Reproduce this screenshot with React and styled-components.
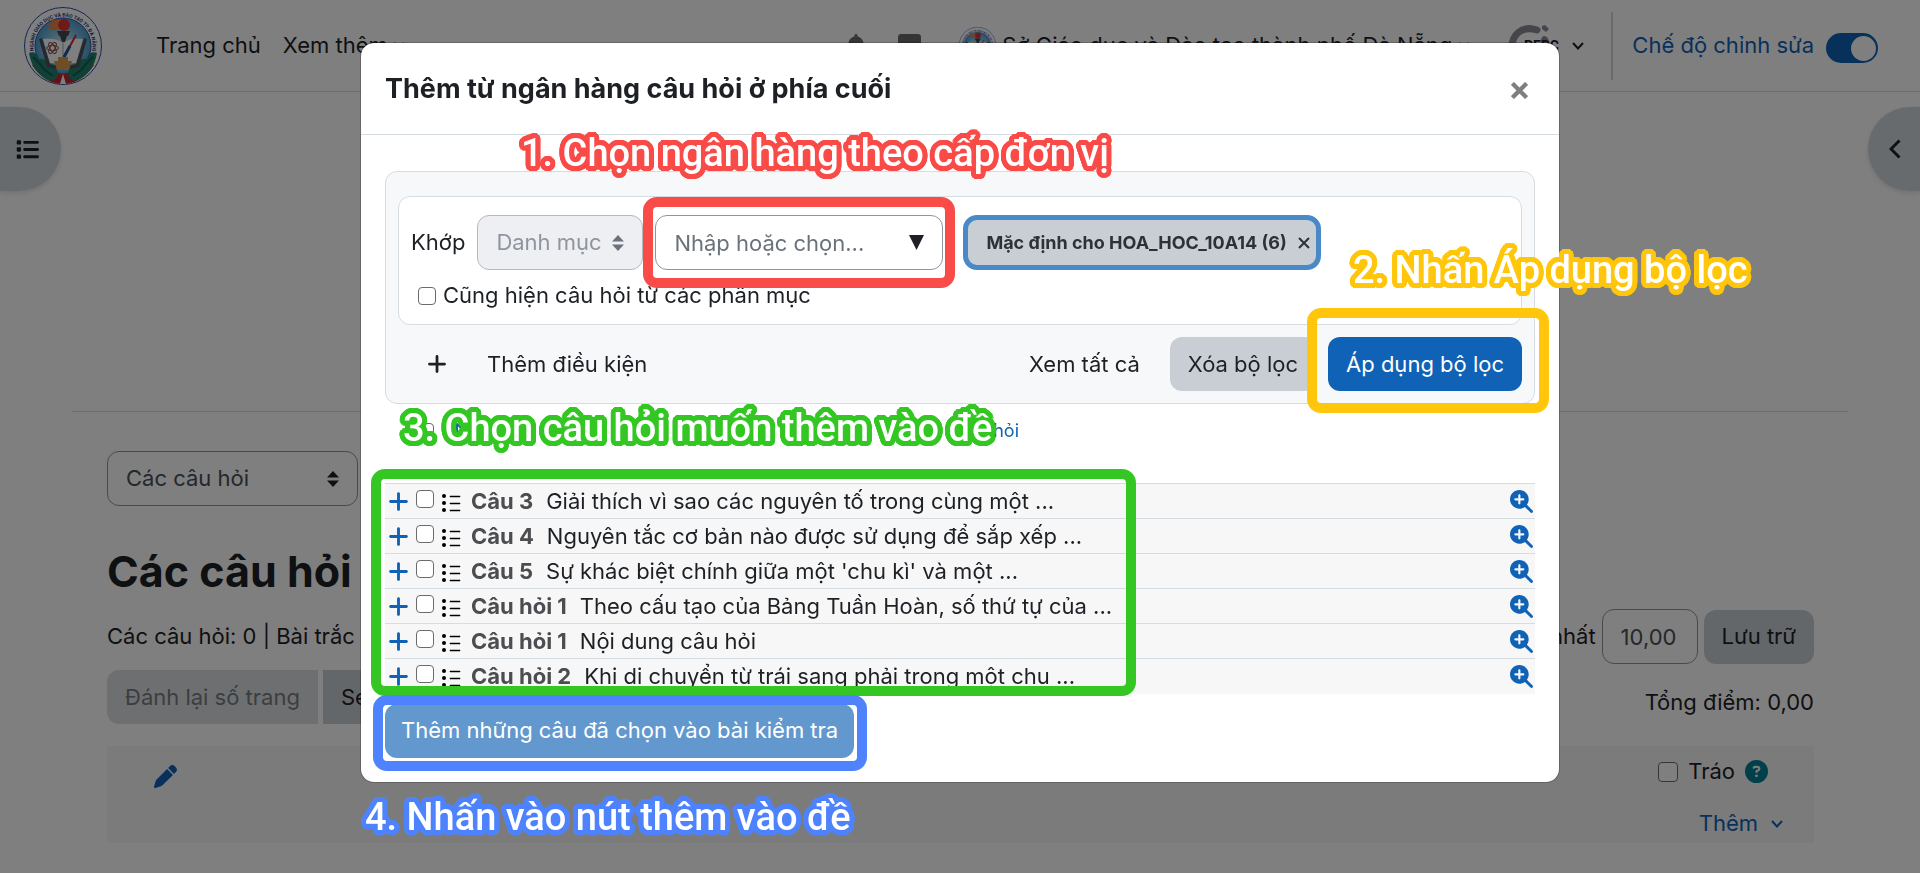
import React, { useId, useState } from 'react';
import styled, { createGlobalStyle, css } from 'styled-components';
import {
    FaBell,
    FaCircleQuestion,
    FaList,
    FaMagnifyingGlassPlus,
    FaPen,
    FaPlus,
} from 'react-icons/fa6';

const GlobalStyle = createGlobalStyle`
    :root {
        --text: #1d2125;
        --muted: #495057;
        --blue: #0f62b5;
        --grey: #c9ced4;
        --line: #d5dce2;
        --red: #f94b48;
        --yellow: #ffc60b;
        --green: #34c724;
        --indigo: #4e83fd;
        --radius: 12px;
        --font: Inter, 'Noto Sans', sans-serif;
    }

    * {
        box-sizing: border-box;
    }

    body {
        margin: 0;
        background: #fff;
        color: var(--text);
        font-family: var(--font);
        font-size: 22px;
        line-height: 33px;
        overflow: hidden;
    }

    button,
    input,
    select {
        font: inherit;
        color: inherit;
    }

    button {
        padding: 0;
        border: 0;
        background: none;
        white-space: nowrap;
    }

    a {
        color: inherit;
        text-decoration: none;
    }

    svg {
        display: block;
        flex: none;
    }
`;

/* ---------- icons ---------- */

const Chevron = () => (
    <svg width="12" height="12" viewBox="0 0 12 12" fill="none" stroke="currentColor" strokeWidth="2">
        <path d="M1 3 6 8.5 11 3" />
    </svg>
);

const ChevronLeft = () => (
    <svg width="12" height="20" viewBox="0 0 12 20" fill="none" stroke="currentColor" strokeWidth="3">
        <path d="M10.5 1.5 2 10l8.5 8.5" />
    </svg>
);

const SortArrows = () => (
    <svg width="12" height="16" viewBox="0 0 12 16" fill="currentColor">
        <path d="M6 0 12 6.5H0zM6 16 0 9.5h12z" />
    </svg>
);

const Caret = () => (
    <svg width="15" height="15" viewBox="0 0 15 15" fill="currentColor">
        <path d="M0 0h15L7.5 15z" />
    </svg>
);

const Cross = ({ size = 12, weight = 2 }) => (
    <svg width={size} height={size} viewBox="0 0 12 12" stroke="currentColor" strokeWidth={weight}>
        <path d="M1 1 11 11M11 1 1 11" />
    </svg>
);

const SortUp = () => (
    <svg width="14" height="16" viewBox="0 0 14 16" fill="none" stroke="currentColor" strokeWidth="2">
        <path d="M5 16V2M1 6l4-4 4 4" />
    </svg>
);

const ChatIcon = () => (
    <svg width="23" height="24" viewBox="0 0 23 24" fill="currentColor">
        <path d="M3 0h17a3 3 0 0 1 3 3v12a3 3 0 0 1-3 3h-6l-6 6v-6H3a3 3 0 0 1-3-3V3a3 3 0 0 1 3-3z" />
    </svg>
);

const ChoiceIcon = () => (
    <svg width="20" height="20" viewBox="0 0 20 20" fill="#000">
        <circle cx="3" cy="3" r="2" />
        <circle cx="3" cy="10" r="2" />
        <circle cx="3" cy="17" r="2" />
        <path d="M9 3h10v1H9zM9 10h10v1H9zM9 17h10v1H9z" stroke="#000" strokeWidth=".5" />
    </svg>
);

const Emblem = ({ size }) => {
    const id = useId();

    return (
        <svg width={size} height={size} viewBox="0 0 78 78">
            <defs>
                <path id={id} d="M12 51A29.5 29.5 0 1 1 66 51" />
                <radialGradient id={`${id}sky`}>
                    <stop offset="0" stopColor="#cfeaf8" />
                    <stop offset="1" stopColor="#4b9fd0" />
                </radialGradient>
            </defs>
            <circle cx="39" cy="39" r="38.5" fill="#fff" stroke="#2c4fa3" strokeWidth="1" />
            <circle cx="39" cy="39" r="28" fill={`url(#${id}sky)`} stroke="#2c4fa3" strokeWidth="1" />
            <path d="M8 58c8 12 19 19 31 19s23-7 31-19l-7-4c-6 8-14 13-24 13s-18-5-24-13z" fill="#c8232f" />
            <path d="M5 46c5-2 9 1 10 6 5-1 9 2 10 7 5 0 8 3 10 8-3 7-8 8-13 5C13 67 7 58 5 46z" fill="#23806f" />
            <path d="M73 46c-5-2-9 1-10 6-5-1-9 2-10 7-5 0-8 3-10 8 3 7 8 8 13 5 9-5 15-14 17-26z" fill="#23806f" />
            <path d="M9 50l6 6 6 7 8 6M69 50l-6 6-6 7-8 6" fill="none" stroke="#145f55" strokeWidth="2" />
            <path d="M39 67l3 10h-6z" fill="#fff" />
            <path d="M15 32l8 28 12 3h8l12-3 8-28-3-1-8 26-13 3-13-3-8-26z" fill="#4d5258" />
            <path d="M19 32c8-1 15 0 20 4 5-4 12-5 20-4l-7 24c-5 0-9 1-13 4-4-3-8-4-13-4z" fill="#fff" />
            <path d="M39 36v22" stroke="#aab" strokeWidth="1" />
            <g fill="none" stroke="#8c4a44" strokeWidth="1">
                <ellipse cx="28.500" cy="41" rx="6" ry="2.500" />
                <ellipse cx="28.500" cy="41" rx="6" ry="2.500" transform="rotate(60 28.500 41)" />
                <ellipse cx="28.500" cy="41" rx="6" ry="2.500" transform="rotate(120 28.500 41)" />
            </g>
            <path d="M33 24h13l-2 5h-9zM36 29h7l-2 6h-3z" fill="#44474d" />
            <path d="M35 22c-5 3-8-1-12 1 2-3 4-3 6-4-3 0-4-2-7-1 3-3 6-2 8-3-1-1-3-1-4-2 5-1 8 1 11-1z" fill="#f08345" />
            <circle cx="40" cy="18" r="6" fill="#e0332c" />
            <path d="M52 28 40 50" stroke="#d1283a" strokeWidth="2" />
            <path d="M46 39 40 50" stroke="#1f55a5" strokeWidth="3" />
            <path d="M34 50h10v4h4l-3 9H33l-3-9h4z" fill="#dc9c4c" />
            <text fill="#27357d" fontSize="5" fontWeight="700" fontFamily="Roboto, sans-serif">
                <textPath href={`#${id}`} startOffset="50%" textAnchor="middle">
                    NGÀNH GIÁO DỤC VÀ ĐÀO TẠO TP. ĐÀ NẴNG
                </textPath>
            </text>
        </svg>
    );
};

const SchoolMark = () => (
    <svg width="52" height="44" viewBox="0 0 52 44">
        <path d="M29 6C14 1 3 11 4 25c1 9 8 15 17 15" fill="none" stroke="#8b8a99" strokeWidth="7" strokeLinecap="round" />
        <path d="M34 2l3-1 4 4-3 3-4-3z" fill="#8b8a99" />
        <path d="M33 16c1-6 7-5 8 2l1 8h-9z" fill="#8b8a99" />
        <text x="16" y="27" fill="#1d2125" fontSize="14" fontWeight="700" fontFamily="Roboto, sans-serif">
            PERC
        </text>
    </svg>
);

/* ---------- shared controls ---------- */

const Button = styled.button`
    height: 54px;
    padding: 0 18px;
    border-radius: var(--radius);

    ${({ $variant }) =>
        $variant === 'secondary' &&
        css`
            background: var(--grey);
        `}

    ${({ $variant }) =>
        $variant === 'primary' &&
        css`
            background: var(--blue);
            color: #fff;
        `}

    ${({ $variant }) =>
        $variant === 'faded' &&
        css`
            background: #6398ce;
            color: #fff;
            padding: 0 16px;
        `}
`;

const Checkbox = styled.input.attrs({ type: 'checkbox' })`
    appearance: none;
    display: block;
    flex: none;
    width: ${({ $size }) => $size || 18}px;
    height: ${({ $size }) => $size || 18}px;
    margin: 0;
    border: 1px solid #6b6b6b;
    border-radius: 4px;
    background: #fff;

    &:checked {
        background: var(--blue);
    }
`;

/* The control and its arrow share one grid cell */
const Field = styled.div`
    position: relative;
    display: grid;
    align-items: center;
    width: ${({ $width }) => $width}px;
    color: ${({ $disabled }) => ($disabled ? '#6a737b' : 'var(--text)')};

    > select,
    > input,
    > svg {
        grid-area: 1 / 1;
    }

    > svg {
        justify-self: end;
        margin-right: 19px;
        pointer-events: none;
    }
`;

const control = css`
    appearance: none;
    width: 100%;
    height: 55px;
    padding: 0 18px;
    border: 1px solid #8f959e;
    border-radius: var(--radius);
    background: #fff;
    color: var(--muted);

    &:disabled {
        border-color: #b4b9bf;
        background: #eeeff2;
        color: #8f959e;
        opacity: 1;
    }

    &::placeholder {
        color: #6a737b;
        opacity: 1;
    }
`;

const Select = styled.select`
    ${control}
`;

const TextInput = styled.input`
    ${control}
`;

/* ---------- course page ---------- */

const Navbar = styled.header`
    display: flex;
    align-items: center;
    height: 92px;
    padding: 0 42px 0 24px;
    border-bottom: 1px solid #d8d8d8;
`;

const Nav = styled.nav`
    display: flex;
    gap: 22px;
    margin-left: 54px;

    a {
        display: flex;
        align-items: center;
        gap: 5px;
    }
`;

const UserArea = styled.div`
    display: flex;
    align-items: center;
    gap: 38px;
    height: 100%;
    margin-left: auto;
`;

const Notices = styled.div`
    display: flex;
    gap: 30px;
`;

const IconButton = styled.button`
    display: flex;
    color: #6a6a6a;
`;

const UserMenu = styled.button`
    display: flex;
    align-items: center;
    gap: ${({ $gap }) => $gap}px;
`;

const EditMode = styled.label`
    display: flex;
    align-items: center;
    gap: 12px;
    height: 68px;
    margin-left: -11px;
    padding-left: 19px;
    border-left: 2px solid #d0d7dd;
    color: var(--blue);
`;

const Switch = styled.input.attrs({ type: 'checkbox', role: 'switch' })`
    appearance: none;
    display: flex;
    align-items: center;
    width: 52px;
    height: 30px;
    margin: 5px 0 0;
    padding: 2px;
    border-radius: 15px;
    background: var(--grey);

    &::before {
        content: '';
        width: 25px;
        height: 25px;
        border-radius: 50%;
        background: #fff;
    }

    &:checked {
        justify-content: flex-end;
        background: var(--blue);
    }
`;

const Drawers = styled.div`
    display: flex;
    justify-content: space-between;
    margin-top: 15px;
`;

const DrawerToggle = styled.button`
    display: flex;
    align-items: center;
    height: 84px;
    background: #d0d7dd;
    box-shadow: 0 2px 5px rgba(0, 0, 0, 0.12);
    width: ${({ $side }) => ($side === 'left' ? 61 : 52)}px;
    padding-left: ${({ $side }) => ($side === 'left' ? 16 : 21)}px;
    border-radius: ${({ $side }) => ($side === 'left' ? '0 42px 42px 0' : '42px 0 0 42px')};
`;

const Main = styled.main`
    margin: 220px 72px 0;
    padding: 39px 34px 0 35px;
    border-top: 1px solid #d8d8d8;

    h1 {
        margin: 40px 0 13px;
        font-size: 43px;
        line-height: 50px;
    }
`;

const Bar = styled.div`
    display: flex;
    align-items: ${({ $align }) => $align || 'center'};
    justify-content: space-between;
    margin-bottom: 6px;
`;

const GradeForm = styled.form`
    display: flex;
    align-items: center;
    gap: 6px;
`;

const GradeLabel = styled.label`
    display: flex;
    align-items: center;
    gap: 6px;

    input {
        width: 96px;
    }
`;

const ButtonGroup = styled.div`
    display: flex;
    gap: 5px;

    ${Button} {
        border-radius: 0;
    }

    ${Button}:first-child {
        border-radius: var(--radius) 0 0 var(--radius);
    }

    ${Button}:disabled {
        background: #dcdfe3;
        color: #777c81;
    }
`;

const Total = styled.div`
    line-height: 44px;
`;

const Section = styled.section`
    display: flex;
    justify-content: space-between;
    margin-top: 22px;
    padding: 9px 31px 3px 47px;
    background: #f7f7f7;

    > button {
        align-self: flex-start;
        margin-top: 10px;
        color: var(--blue);
    }
`;

const SectionTools = styled.div`
    display: flex;
    flex-direction: column;
    align-items: flex-end;
    gap: 19px;
`;

const Shuffle = styled.label`
    display: flex;
    align-items: center;
    gap: 10px;
    padding-right: 15px;

    svg {
        color: #008196;
    }
`;

const AddMenu = styled.button`
    display: flex;
    align-items: center;
    gap: 13px;
    color: var(--blue);
`;

/* ---------- dialog ---------- */

const Backdrop = styled.div`
    position: fixed;
    inset: 0;
    display: flex;
    align-items: flex-start;
    justify-content: center;
    padding: 42px 16px;
    background: rgba(0, 0, 0, 0.5);
`;

const Dialog = styled.div`
    position: relative;
    width: 100%;
    max-width: 1200px;
    border: 1px solid rgba(0, 0, 0, 0.2);
    border-radius: 14px;
    background: #fff;
    background-clip: padding-box;
`;

const DialogHeader = styled.header`
    display: flex;
    align-items: center;
    justify-content: space-between;
    height: 92px;
    padding: 0 31px 0 24px;
    border-bottom: 1px solid var(--line);

    h2 {
        margin: 0;
        font-size: 27px;
        line-height: 40px;
    }

    button {
        margin-top: 4px;
        color: #7f7f7f;
    }
`;

const DialogBody = styled.div`
    padding: 36px 24px 24px;
`;

const Filters = styled.section`
    padding: 24px 12px 12px;
    border: 1px solid var(--line);
    border-radius: var(--radius);
    background: #f7f8fa;
`;

const Condition = styled.div`
    padding: 18px 12px 12px;
    border: 1px solid var(--line);
    border-radius: var(--radius);
    background: #fff;
`;

const ConditionRow = styled.div`
    display: flex;
    align-items: center;
    gap: 12px;
`;

const Chip = styled.span`
    display: flex;
    align-items: center;
    gap: 11px;
    height: 55px;
    margin-left: 8px;
    padding: 0 6px 0 18px;
    border: 5px solid #4a89c8;
    border-radius: 14px;
    background: var(--grey);
    color: #2d3236;
    font-size: 18px;
    font-weight: 700;
    white-space: nowrap;
`;

const CheckLabel = styled.label`
    display: flex;
    align-items: center;
    gap: 7px;
    margin-top: 9px;
    padding-left: 7px;
`;

const FilterActions = styled.div`
    display: flex;
    align-items: center;
    gap: 12px;
    margin-top: 12px;
`;

const AddCondition = styled.button`
    display: flex;
    align-items: center;
    gap: 39px;
    height: 54px;
    margin-right: auto;
    padding-left: 28px;
`;

const Anchor = styled.div`
    position: relative;
`;

const SortBar = styled.div`
    display: flex;
    align-items: center;
    gap: 18px;
    width: 634px;
    height: 24px;
    margin: 14px 0 41px;
    padding-left: 34px;
    color: var(--blue);
    font-size: 18px;

    a:last-child {
        margin-left: auto;
    }
`;

const Questions = styled.table`
    width: 100%;
    border-collapse: collapse;

    tr {
        height: 35px;
        border-top: 1px solid var(--line);
        background: #f7f7f7;
    }

    td {
        padding: 0;
    }

    td:nth-child(1) {
        width: 31px;
        padding-left: 2px;
    }

    td:nth-child(2) {
        width: 25px;
        padding-bottom: 4px;
    }

    td:nth-child(3) {
        width: 30px;
        padding-top: 4px;
    }

    td:last-child {
        width: 25px;
    }

    button {
        display: flex;
        color: var(--blue);
    }

    b {
        margin-right: 13px;
        color: #4b4d50;
    }
`;

const Submit = styled(Anchor)`
    width: fit-content;
    margin-top: 10px;
`;

/* ---------- step annotations, drawn over the dialog ---------- */

const Frame = styled.span`
    position: absolute;
    inset: ${({ $inset }) => $inset};
    width: ${({ $width }) => $width};
    border: 10px solid ${({ $color }) => $color};
    border-radius: 14px;
    pointer-events: none;
`;

const outline = color =>
    Array.from({ length: 32 }, (_, i) => {
        const angle = (i * Math.PI) / 16;
        return `${(Math.cos(angle) * 5).toFixed(1)}px ${(Math.sin(angle) * 5).toFixed(1)}px 0 ${color}`;
    }).join(', ');

const Step = styled.strong`
    position: absolute;
    top: ${({ $top }) => $top}px;
    left: ${({ $left }) => $left}px;
    color: #fff;
    font-family: Roboto, 'Noto Sans', sans-serif;
    font-size: 38px;
    font-weight: 500;
    line-height: 44px;
    white-space: nowrap;
    text-shadow: ${({ $color }) => outline($color)};
    pointer-events: none;
`;

const steps = [
    { text: '1. Chọn ngân hàng theo cấp đơn vị', color: 'var(--red)', top: 88, left: 160 },
    { text: '2. Nhấn Áp dụng bộ lọc', color: 'var(--yellow)', top: 205, left: 992 },
    { text: '3. Chọn câu hỏi muốn thêm vào đề', color: 'var(--green)', top: 363, left: 42 },
    { text: '4. Nhấn vào nút thêm vào đề', color: 'var(--indigo)', top: 752, left: 4 },
];

const questions = [
    { name: 'Câu 3', text: 'Giải thích vì sao các nguyên tố trong cùng một ...' },
    { name: 'Câu 4', text: 'Nguyên tắc cơ bản nào được sử dụng để sắp xếp ...' },
    { name: 'Câu 5', text: "Sự khác biệt chính giữa một 'chu kì' và một ..." },
    { name: 'Câu hỏi 1', text: 'Theo cấu tạo của Bảng Tuần Hoàn, số thứ tự của ...' },
    { name: 'Câu hỏi 1', text: 'Nội dung câu hỏi' },
    { name: 'Câu hỏi 2', text: 'Khi di chuyển từ trái sang phải trong một chu ...' },
];

const CoursePage = () => {
    const [editing, setEditing] = useState(true);

    return (
        <>
            <Navbar>
                <a href="#home" aria-label="Trang chủ">
                    <Emblem size={78} />
                </a>
                <Nav>
                    <a href="#home">Trang chủ</a>
                    <a href="#more">
                        Xem thêm <Chevron />
                    </a>
                </Nav>
                <UserArea>
                    <Notices>
                        <IconButton aria-label="Thông báo">
                            <FaBell size={24} />
                        </IconButton>
                        <IconButton aria-label="Tin nhắn">
                            <ChatIcon />
                        </IconButton>
                    </Notices>
                    <UserMenu $gap={6}>
                        <Emblem size={37} />
                        Sở Giáo dục và Đào tạo thành phố Đà Nẵng
                        <Chevron />
                    </UserMenu>
                    <UserMenu $gap={12} aria-label="Tài khoản">
                        <SchoolMark />
                        <Chevron />
                    </UserMenu>
                    <EditMode>
                        Chế độ chỉnh sửa
                        <Switch checked={editing} onChange={e => setEditing(e.target.checked)} />
                    </EditMode>
                </UserArea>
            </Navbar>
            <Drawers>
                <DrawerToggle $side="left" aria-label="Mở mục lục">
                    <FaList size={23} />
                </DrawerToggle>
                <DrawerToggle $side="right" aria-label="Mở khối">
                    <ChevronLeft />
                </DrawerToggle>
            </Drawers>
            <Main>
                <Field $width={251}>
                    <Select aria-label="Trang">
                        <option>Các câu hỏi</option>
                    </Select>
                    <SortArrows />
                </Field>
                <h1>Các câu hỏi</h1>
                <Bar>
                    <div>Các câu hỏi: 0 | Bài trắc nghiệm này đang mở</div>
                    <GradeForm>
                        <GradeLabel>
                            Điểm cao nhất
                            <TextInput defaultValue="10,00" />
                        </GradeLabel>
                        <Button type="button" $variant="secondary">
                            Lưu trữ
                        </Button>
                    </GradeForm>
                </Bar>
                <Bar $align="flex-end">
                    <ButtonGroup>
                        <Button $variant="secondary" disabled>
                            Đánh lại số trang
                        </Button>
                        <Button $variant="secondary">Select multiple items</Button>
                    </ButtonGroup>
                    <Total>Tổng điểm: 0,00</Total>
                </Bar>
                <Section>
                    <button aria-label="Sửa tiêu đề">
                        <FaPen size={23} />
                    </button>
                    <SectionTools>
                        <Shuffle>
                            <Checkbox $size={20} />
                            Tráo
                            <FaCircleQuestion size={23} />
                        </Shuffle>
                        <AddMenu>
                            Thêm <Chevron />
                        </AddMenu>
                    </SectionTools>
                </Section>
            </Main>
        </>
    );
};

const QuestionBankDialog = () => (
    <Dialog role="dialog" aria-labelledby="dialog-title">
        <DialogHeader>
            <h2 id="dialog-title">Thêm từ ngân hàng câu hỏi ở phía cuối</h2>
            <button aria-label="Đóng">
                <Cross size={17} weight={3} />
            </button>
        </DialogHeader>
        <DialogBody>
            <Filters>
                <Condition>
                    <ConditionRow>
                        <span>Khớp</span>
                        <Field $width={166} $disabled>
                            <Select disabled aria-label="Khớp">
                                <option>Danh mục</option>
                            </Select>
                            <SortArrows />
                        </Field>
                        <Field $width={288}>
                            <TextInput placeholder="Nhập hoặc chọn..." aria-label="Danh mục" />
                            <Caret />
                            <Frame $color="var(--red)" $inset="-18px -12px" />
                        </Field>
                        <Chip>
                            Mặc định cho HOA_HOC_10A14 (6)
                            <button aria-label="Bỏ chọn">
                                <Cross />
                            </button>
                        </Chip>
                    </ConditionRow>
                    <CheckLabel>
                        <Checkbox />
                        Cũng hiện câu hỏi từ các phân mục
                    </CheckLabel>
                </Condition>
                <FilterActions>
                    <AddCondition>
                        <FaPlus size={22} />
                        Thêm điều kiện
                    </AddCondition>
                    <Button>Xem tất cả</Button>
                    <Button $variant="secondary">Xóa bộ lọc</Button>
                    <Anchor>
                        <Button $variant="primary">Áp dụng bộ lọc</Button>
                        <Frame $color="var(--yellow)" $inset="-29px -27px -22px -21px" />
                    </Anchor>
                </FilterActions>
            </Filters>
            <SortBar>
                <Checkbox $size={15} aria-label="Chọn tất cả" />
                <a href="#sort-type" aria-label="Sắp xếp theo loại">
                    <SortUp />
                </a>
                <a href="#sort-name">Câu hỏi</a>
            </SortBar>
            <Anchor>
                <Questions>
                    <tbody>
                        {questions.map(({ name, text }, i) => (
                            <tr key={i}>
                                <td>
                                    <button aria-label="Thêm vào bài kiểm tra">
                                        <FaPlus size={23} />
                                    </button>
                                </td>
                                <td>
                                    <Checkbox id={`question-${i}`} />
                                </td>
                                <td>
                                    <ChoiceIcon />
                                </td>
                                <td>
                                    <label htmlFor={`question-${i}`}>
                                        <b>{name}</b>
                                        {text}
                                    </label>
                                </td>
                                <td>
                                    <button aria-label="Xem trước">
                                        <FaMagnifyingGlassPlus size={23} />
                                    </button>
                                </td>
                            </tr>
                        ))}
                    </tbody>
                </Questions>
                <Frame $color="var(--green)" $inset="-14px auto -2px -14px" $width="765px" />
            </Anchor>
            <Submit>
                <Button $variant="faded">Thêm những câu đã chọn vào bài kiểm tra</Button>
                <Frame $color="var(--indigo)" $inset="-9px -13px -13px -12px" />
            </Submit>
        </DialogBody>
        {steps.map(({ text, color, top, left }) => (
            <Step key={text} $color={color} $top={top} $left={left}>
                {text}
            </Step>
        ))}
    </Dialog>
);

const App = () => (
    <>
        <GlobalStyle />
        <CoursePage />
        <Backdrop>
            <QuestionBankDialog />
        </Backdrop>
    </>
);

export default App;
